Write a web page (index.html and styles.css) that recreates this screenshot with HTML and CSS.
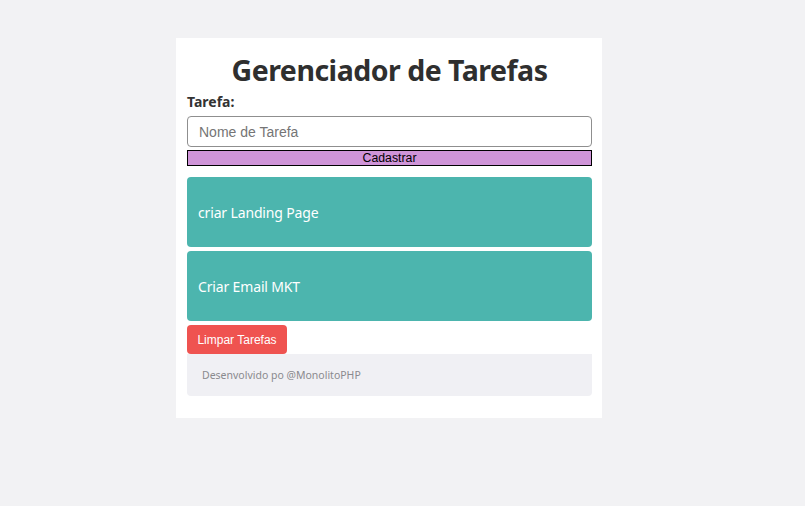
FILE: index.html
```html
<!DOCTYPE html>
<html lang="pt-BR">
<head>
<meta charset="utf-8">
<title>Gerenciador de Tarefas</title>
<link rel="stylesheet" href="styles.css">
</head>
<body>
<main class="app">
  <h1 class="title">Gerenciador de Tarefas</h1>
  <label class="label" for="tarefa">Tarefa:</label>
  <input class="input" id="tarefa" type="text" placeholder="Nome de Tarefa">
  <button class="btn-add" type="button">Cadastrar</button>
  <ul class="tasks">
    <li class="task">criar Landing Page</li>
    <li class="task">Criar Email MKT</li>
  </ul>
  <button class="btn-clear" type="button">Limpar Tarefas</button>
  <footer class="footer">Desenvolvido po @MonolitoPHP</footer>
</main>
</body>
</html>
```
FILE: styles.css
```css
html, body {
  margin: 0;
  padding: 0;
  background: #f2f2f4;
}
body {
  font-family: "Noto Sans", "Open Sans", sans-serif;
  color: #333;
}
.app {
  width: 426px;
  box-sizing: border-box;
  margin: 38px 0 0 176px;
  background: #fff;
  padding: 10px 10px 22px 11px;
  display: flex;
  flex-direction: column;
}
.title {
  margin: 0;
  text-align: center;
  font-size: 28.5px;
  font-weight: 700;
  line-height: 44px;
  color: #2f2f2f;
  letter-spacing: -0.5px;
}
.label {
  font-size: 14px;
  font-weight: 700;
  line-height: 18px;
  color: #333;
  margin-top: 1px;
}
.input {
  margin-top: 5px;
  height: 31px;
  box-sizing: border-box;
  border: 1px solid #8f8f8f;
  border-radius: 4px;
  padding: 0 11px;
  font-family: "Liberation Sans", Arial, sans-serif;
  font-size: 14px;
  color: #333;
  outline: none;
}
.input::placeholder {
  color: #757575;
}
.btn-add {
  margin-top: 3px;
  height: 16px;
  padding: 0;
  border: 1px solid #000;
  background: #cf94d8;
  font-family: "Liberation Sans", Arial, sans-serif;
  font-size: 12.3px;
  line-height: 14px;
  color: #000;
  cursor: pointer;
}
.tasks {
  list-style: none;
  margin: 11px 0 0;
  padding: 0;
  display: flex;
  flex-direction: column;
  gap: 4px;
}
.task {
  height: 70px;
  box-sizing: border-box;
  background: #4cb5ae;
  border-radius: 4px;
  color: #fff;
  font-size: 14px;
  letter-spacing: -0.15px;
  display: flex;
  align-items: center;
  padding: 0 11px;
}
.btn-clear {
  align-self: flex-start;
  margin-top: 4px;
  width: 100px;
  height: 29px;
  border: none;
  border-radius: 4px;
  background: #ef5350;
  color: #fff;
  font-family: "Liberation Sans", Arial, sans-serif;
  font-size: 12px;
  padding: 0;
  cursor: pointer;
}
.footer {
  height: 42px;
  box-sizing: border-box;
  background: #f0f0f4;
  border-radius: 0 0 4px 4px;
  color: #8a8a8e;
  font-size: 10.5px;
  display: flex;
  align-items: center;
  padding: 0 15px;
}
```
